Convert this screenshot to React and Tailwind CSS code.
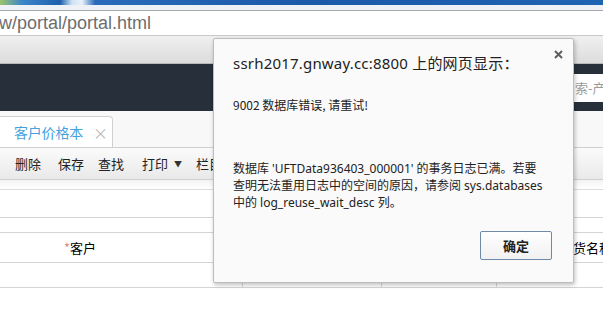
export default function App() {
  const tools = [
    { label: '删除', left: 15 },
    { label: '保存', left: 58 },
    { label: '查找', left: 98 },
    { label: '打印', left: 142, caret: true },
    { label: '栏目', left: 196 },
  ]

  return (
    <div
      className="relative w-[603px] h-[327px] overflow-hidden bg-white"
      style={{ fontFamily: '"Noto Sans CJK SC", "Noto Sans", sans-serif' }}
    >
      {/* browser chrome */}
      <div className="h-[5px] bg-[linear-gradient(90deg,#9cc36a_0px,#3b86c9_22px,#1d5fae_60px,#cfe2f3_72px,#e8f1fa_82px,#2a6cbb_95px,#1a5aa8_300px,#1f63b3_603px)]" />
      <div className="h-[6px] bg-[#eef2f6] border-b border-[#a8a8a8]" />
      <div className="h-[25px] flex items-center bg-white border-b border-[#c9c9c9]">
        <span className="text-[18px] leading-none text-[#6d6d6d] -ml-[1px]" style={{ fontFamily: '"Liberation Sans", Arial, sans-serif' }}>
          w/portal/portal.html
        </span>
      </div>
      <div className="h-[28px] bg-[linear-gradient(180deg,#f0f0f0,#dcdcdc)] border-b border-[#b9b9b9]" />

      {/* dark app header */}
      <div className="h-[47px] bg-[#27303a] flex items-center justify-end">
        <div className="w-[30px] h-[28px] bg-white flex items-center overflow-hidden">
          <span className="text-[13px] text-[#9a9a9a] whitespace-nowrap pl-[2px]">索-产</span>
        </div>
      </div>

      {/* tabs */}
      <div className="h-[36px] bg-[#f8f8f8] flex items-end">
        <div className="h-[31px] w-[113px] bg-white border-t border-r border-[#d0d0d0] rounded-tr-[4px] flex items-center pl-[14px] gap-[10px]">
          <span className="text-[14px] leading-none text-[#45a2dc] tracking-[-0.2px]">客户价格本</span>
          <span className="text-[15px] leading-none text-[#b8b8b8]">×</span>
        </div>
      </div>

      {/* toolbar */}
      <div className="relative h-[33px] bg-[linear-gradient(180deg,#fbfbfb,#e9e9e9)] border-t border-b border-[#cfcfcf]">
        {tools.map(t => (
          <div key={t.label} className="absolute top-0 h-full flex items-center gap-[6px] text-[13px] text-[#222]" style={{ left: t.left }}>
            <span className="leading-none">{t.label}</span>
            {t.caret && <span className="text-[8px] leading-none text-[#333]">▼</span>}
          </div>
        ))}
      </div>

      {/* grid */}
      <div className="h-[10px] bg-[linear-gradient(180deg,#f3f3f3,#ffffff)] border-b border-[#dcdcdc]" />
      <div className="h-[28px] border-b border-[#d4d4d4]" />
      <div className="h-[15px] border-b border-[#d4d4d4]" />
      <div className="h-[30px] border-b border-[#d4d4d4] grid grid-cols-[573px_1fr] items-center text-[13px] text-black whitespace-nowrap overflow-hidden">
        <span className="pl-[64px]"><span className="text-[#d88a8a]">*</span>客户</span>
        <span className="overflow-hidden">货名称</span>
      </div>
      <div className="h-[25px] border-b border-[#d4d4d4] grid grid-cols-[243px_139px_115px_1fr]">
        <div className="border-r border-[#d8d8d8]" />
        <div className="border-r border-[#d8d8d8]" />
        <div className="border-r border-[#d8d8d8]" />
        <div />
      </div>

      {/* alert dialog */}
      <div className="absolute left-[213px] top-[38px] w-[361px] h-[245px] bg-[#fafafa] border border-[#bdbdbd] rounded-[2px] shadow-[1px_2px_4px_rgba(0,0,0,0.25)] flex flex-col pl-[19px]">
        <svg className="absolute right-[10px] top-[11px]" width="9" height="9" viewBox="0 0 9 9">
          <path d="M1 1L8 8M8 1L1 8" stroke="#5f5f5f" strokeWidth="2" />
        </svg>
        <div className="mt-[14px] h-[20px] flex items-center text-[15px] tracking-[0.2px] text-[#222] whitespace-nowrap" style={{ fontFamily: '"Noto Sans", "Noto Sans CJK SC", sans-serif' }}>
          ssrh2017.gnway.cc:8800 上的网页显示：
        </div>
        <div className="mt-[23px] text-[12px] leading-[17px] text-[#222] whitespace-nowrap">
          9002 数据库错误, 请重试!
        </div>
        <div className="mt-[47px] text-[12px] leading-[17px] text-[#222] whitespace-nowrap" style={{ fontFamily: '"Noto Sans", "Noto Sans CJK SC", sans-serif' }}>
          <div>数据库 'UFTData936403_000001' 的事务日志已满。若要</div>
          <div>查明无法重用日志中的空间的原因，请参阅 sys.databases</div>
          <div>中的 log_reuse_wait_desc 列。</div>
        </div>
        <button className="mt-[20px] self-end mr-[21px] w-[72px] h-[29px] border border-[#6f8aa8] rounded-[2px] bg-[linear-gradient(180deg,#ffffff,#f1f1f1)] text-[13px] font-bold text-[#222]">
          确定
        </button>
      </div>
    </div>
  )
}
